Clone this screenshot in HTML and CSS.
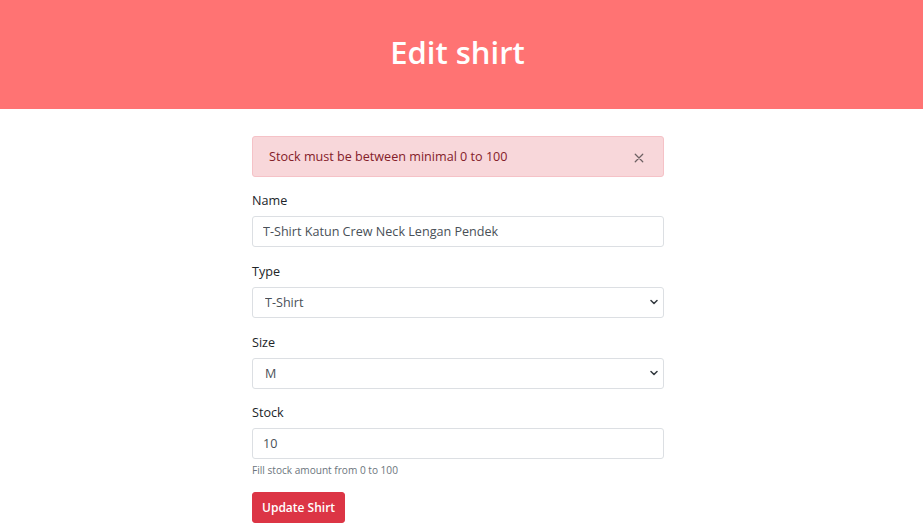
FILE: index.html
```html
<!DOCTYPE html>
<html lang="en">
<head>
<meta charset="utf-8">
<title>Edit shirt</title>
<link rel="stylesheet" href="styles.css">
</head>
<body>
<header class="hero">
  <h1 class="hero-title">Edit shirt</h1>
</header>
<div class="content">
  <main class="container">
    <div class="alert" role="alert">
      <span class="alert-text">Stock must be between minimal 0 to 100</span>
      <button type="button" class="btn-close" aria-label="Close">
        <svg viewBox="0 0 16 16" width="10" height="10"><path d="M2 2 L14 14 M14 2 L2 14" stroke="currentColor" stroke-width="2" stroke-linecap="round" fill="none"/></svg>
      </button>
    </div>
    <form class="form">
      <div class="field">
        <label class="field-label" for="name">Name</label>
        <input class="field-control" id="name" type="text" value="T-Shirt Katun Crew Neck Lengan Pendek">
      </div>
      <div class="field">
        <label class="field-label" for="type">Type</label>
        <div class="select-wrap">
          <select class="field-control field-select" id="type">
            <option>T-Shirt</option>
          </select>
          <svg class="chevron" viewBox="0 0 16 16" width="8" height="8"><path d="M2 5 L8 11 L14 5" stroke="currentColor" stroke-width="3" stroke-linecap="round" stroke-linejoin="round" fill="none"/></svg>
        </div>
      </div>
      <div class="field field-size">
        <label class="field-label" for="size">Size</label>
        <div class="select-wrap">
          <select class="field-control field-select" id="size">
            <option>M</option>
          </select>
          <svg class="chevron" viewBox="0 0 16 16" width="8" height="8"><path d="M2 5 L8 11 L14 5" stroke="currentColor" stroke-width="3" stroke-linecap="round" stroke-linejoin="round" fill="none"/></svg>
        </div>
      </div>
      <div class="field field-last">
        <label class="field-label" for="stock">Stock</label>
        <input class="field-control" id="stock" type="text" value="10">
        <div class="field-help">Fill stock amount from 0 to 100</div>
      </div>
      <button type="button" class="btn-submit">Update Shirt</button>
    </form>
  </main>
</div>
</body>
</html>
```
FILE: styles.css
```css
* { box-sizing: border-box; }
html, body { margin: 0; padding: 0; background: #fff; }
body {
  font-family: "Open Sans", "Noto Sans", Arial, sans-serif;
  font-size: 12.6px;
  line-height: 20px;
  color: #212529;
}
.hero {
  background: #ff7373;
  height: 109px;
  display: flex;
  align-items: center;
  justify-content: center;
  padding-right: 8px;
}
.hero-title {
  margin: 0;
  color: #fff;
  font-size: 31px;
  font-weight: 600;
  line-height: 1.2;
  padding-bottom: 4px;
}
.content { padding-right: 7px; }
.container {
  width: 412px;
  margin: 27px auto 0;
}
.alert {
  display: flex;
  align-items: center;
  justify-content: space-between;
  height: 41px;
  padding: 0 17px 0 16px;
  background: #f8d7da;
  border: 1px solid #f5c2c7;
  border-radius: 3px;
  color: #842029;
  margin-bottom: 14px;
}
.btn-close {
  border: 0;
  background: transparent;
  padding: 0;
  width: 10px;
  height: 10px;
  color: #6e6163;
  display: flex;
  align-items: center;
  justify-content: center;
  margin-right: 2px;
  margin-top: 2px;
}
.btn-close svg { display: block; }
.form { display: flex; flex-direction: column; }
.field { margin-bottom: 15px; }
.field-size { margin-bottom: 14px; }
.field-last { margin-bottom: 15px; }
.field-label {
  display: block;
  margin-bottom: 5px;
  color: #212529;
}
.field-control {
  display: block;
  width: 100%;
  height: 31px;
  padding: 0 10px;
  font: inherit;
  color: #495057;
  background: #fff;
  border: 1px solid #dcdfe3;
  border-radius: 3px;
  outline: none;
}
.select-wrap { position: relative; }
.field-select {
  appearance: none;
  -webkit-appearance: none;
  padding-left: 12px;
}
.chevron {
  position: absolute;
  right: 6px;
  top: 11px;
  color: #343a40;
  pointer-events: none;
}
.field-help {
  margin-top: 4px;
  font-size: 10.1px;
  line-height: 14px;
  color: #6c757d;
}
.btn-submit {
  align-self: flex-start;
  height: 31px;
  padding: 0 9px;
  font: inherit;
  font-size: 12px;
  font-weight: 600;
  color: #fff;
  background: #dc3545;
  border: 1px solid #dc3545;
  border-radius: 3px;
}
```
